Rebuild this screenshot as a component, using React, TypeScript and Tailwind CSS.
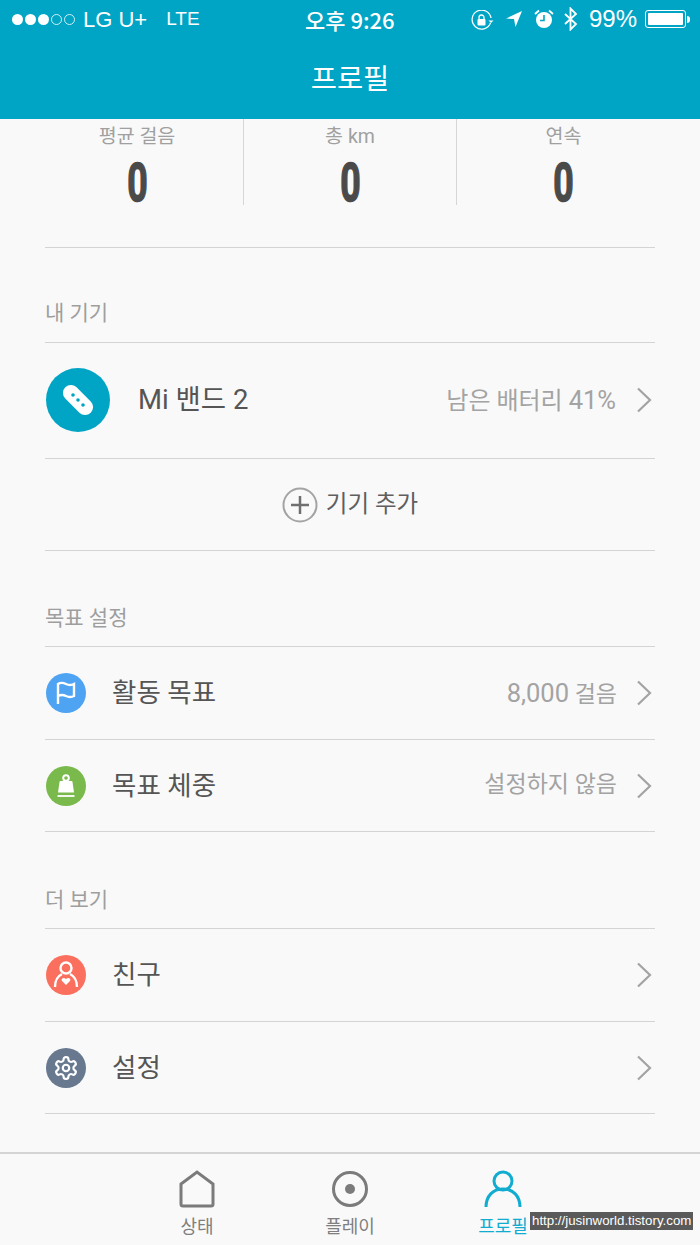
import type { ReactNode } from "react";

const font = { fontFamily: '"Roboto", "Noto Sans CJK KR", sans-serif' };

const Chevron = () => (
  <svg width="16" height="26" viewBox="0 0 16 26" fill="none" className="shrink-0">
    <path d="M2 1.500 14 13 2 24.500" stroke="#a3a3a3" strokeWidth="2.200" />
  </svg>
);

const StatusBar = () => (
  <div className="relative flex h-[38px] items-center pl-3 pr-[10px] text-white font-['Liberation_Sans',sans-serif]">
    <div className="flex items-center gap-[2px]">
      {[0, 1, 2].map((i) => (
        <span key={i} className="h-[11px] w-[11px] rounded-full bg-white" />
      ))}
      {[3, 4].map((i) => (
        <span key={i} className="h-[11px] w-[11px] rounded-full border border-white/80" />
      ))}
    </div>
    <span className="ml-[8px] text-[22px] font-light">LG U+</span>
    <span className="ml-[19px] text-[19px] font-light">LTE</span>
    <span className="absolute left-[305px] text-[22px] font-['Noto_Sans_CJK_KR'] font-medium leading-none">
      오후 9:26
    </span>
    <div className="ml-auto flex items-center">
      <svg className="mt-[3px]" width="24" height="22" viewBox="0 0 24 22" fill="none" stroke="white" strokeWidth="1.200">
        <path d="M19.500 13A9.500 9.500 0 1 1 20 8" />
        <path d="M17.500 10.500h5l-2.500 2.500z" fill="white" stroke="none" />
        <rect x="6.500" y="9" width="8" height="6.500" rx="1" fill="white" stroke="none" />
        <path d="M8 9V7.500a2.500 2.500 0 0 1 5 0V9" strokeWidth="1.300" />
      </svg>
      <svg className="ml-[10px]" width="18" height="18" viewBox="0 0 18 18">
        <path d="M17 1 1 8.500l8 .5 1.500 8z" fill="white" />
      </svg>
      <svg className="ml-[11px]" width="20" height="20" viewBox="0 0 20 20">
        <circle cx="10" cy="11" r="8" fill="white" />
        <path d="M10 6v5.500H6" stroke="#00a5c5" strokeWidth="1.600" fill="none" />
        <path d="M1 5 5 1.500M19 5l-4-3.500" stroke="white" strokeWidth="1.800" />
      </svg>
      <svg className="ml-[9px]" width="16" height="24" viewBox="0 0 16 24" fill="none" stroke="white" strokeWidth="1.800">
        <path d="M2 7l11 10-5.500 5.500V1.500L13 7 2 17" />
      </svg>
      <span className="ml-[10px] text-[24px] font-light leading-none">99%</span>
      <div className="ml-[8px] flex items-center">
        <div className="h-[18px] w-[41px] rounded-[3px] border border-white p-[2px]">
          <div className="h-full w-full rounded-[1px] bg-white" />
        </div>
        <span className="ml-[1px] h-[7px] w-[3px] rounded-r-sm bg-white" />
      </div>
    </div>
  </div>
);

const Stat = ({ label, border }: { label: string; border?: boolean }) => (
  <div className={`flex h-[86px] w-[213px] shrink-0 flex-col items-center ${border ? "border-r border-[#d6d6d6]" : ""}`}>
    <span className="mt-[5px] text-[19.500px] leading-[26px] text-[#a0a0a0]">{label}</span>
    <span className="mt-[9px] scale-x-[0.66] font-['Roboto'] text-[54px] font-bold leading-[48px] text-[#4a4a4a] [-webkit-text-stroke:1.500px_#4a4a4a]">
      0
    </span>
  </div>
);

const SectionTitle = ({ children, className }: { children: ReactNode; className: string }) => (
  <div className={`${className} border-b border-[#d4d4d4] text-[21px] leading-[28px] text-[#9e9e9e]`}>{children}</div>
);

const Row = ({ icon, label, value, height = "h-[93px]" }: { icon: ReactNode; label: string; value?: ReactNode; height?: string }) => (
  <div className={`flex ${height} items-center border-b border-[#d4d4d4] pl-[1px] pr-[3px]`}>
    {icon}
    <span className="ml-[26px] text-[26.500px] text-[#555555]">{label}</span>
    {value && <span className="ml-auto text-[23px] text-[#a3a3a3]">{value}</span>}
    <span className={value ? "ml-[19px]" : "ml-auto"}>
      <Chevron />
    </span>
  </div>
);

const FlagIcon = () => (
  <div className="flex h-10 w-10 items-center justify-center rounded-full bg-[#4ea3f3]">
    <svg width="20" height="24" viewBox="0 0 20 24" fill="none" stroke="white" strokeWidth="2.400">
      <path d="M2 23V3c3-2 5-1.500 8 0s5 1.500 8 0v12c-3 1.500-5 1.500-8 0s-5-1.500-8 0" />
    </svg>
  </div>
);

const WeightIcon = () => (
  <div className="flex h-10 w-10 items-center justify-center rounded-full bg-[#7ab94c]">
    <svg width="20" height="24" viewBox="0 0 20 24">
      <circle cx="10" cy="4" r="2.800" fill="none" stroke="white" strokeWidth="2" />
      <path d="M4.500 7h11a1 1 0 0 1 1 1l1.500 10.500H2L3.500 8a1 1 0 0 1 1-1z" fill="white" />
      <path d="M1.500 22h17" stroke="white" strokeWidth="1.800" />
    </svg>
  </div>
);

const FriendIcon = () => (
  <div className="flex h-10 w-10 items-center justify-center rounded-full bg-[#fb6f5e]">
    <svg width="30" height="30" viewBox="0 0 30 30" fill="none" stroke="white" strokeWidth="2.400">
      <circle cx="15" cy="8" r="5.500" />
      <path d="M4 27c0-7 3-11 7-13M26 27c0-7-3-11-7-13" />
      <path d="M15 25l-4-4c-1.500-2 1.500-4.500 4-2 2.500-2.500 5.500 0 4 2z" fill="white" stroke="none" />
    </svg>
  </div>
);

const GearIcon = () => (
  <div className="flex h-10 w-10 items-center justify-center rounded-full bg-[#67788f]">
    <svg width="26" height="26" viewBox="0 0 24 24" fill="none" stroke="white" strokeWidth="2">
      <path d="M12.220 2h-.440a2 2 0 0 0-2 2v.180a2 2 0 0 1-1 1.730l-.430.250a2 2 0 0 1-2 0l-.150-.080a2 2 0 0 0-2.730.730l-.220.380a2 2 0 0 0 .730 2.730l.150.100a2 2 0 0 1 1 1.720v.510a2 2 0 0 1-1 1.740l-.150.090a2 2 0 0 0-.730 2.730l.220.380a2 2 0 0 0 2.730.730l.150-.080a2 2 0 0 1 2 0l.430.250a2 2 0 0 1 1 1.730V20a2 2 0 0 0 2 2h.440a2 2 0 0 0 2-2v-.180a2 2 0 0 1 1-1.730l.430-.250a2 2 0 0 1 2 0l.150.080a2 2 0 0 0 2.730-.730l.220-.390a2 2 0 0 0-.730-2.730l-.150-.080a2 2 0 0 1-1-1.740v-.500a2 2 0 0 1 1-1.740l.150-.090a2 2 0 0 0 .730-2.730l-.220-.380a2 2 0 0 0-2.730-.730l-.150.080a2 2 0 0 1-2 0l-.430-.250a2 2 0 0 1-1-1.730V4a2 2 0 0 0-2-2z" />
      <circle cx="12" cy="12" r="3" />
    </svg>
  </div>
);

const Tab = ({ icon, label, active }: { icon: ReactNode; label: string; active?: boolean }) => (
  <div className="flex w-[153px] flex-col items-center">
    {icon}
    <span className={`mt-[7px] text-[18px] leading-[24px] ${active ? "text-[#12acd0]" : "text-[#7f7f7f]"}`}>{label}</span>
  </div>
);

const Digits = ({ children }: { children: ReactNode }) => <span className="text-[25.500px]">{children}</span>;

export default function App() {
  return (
    <div className="relative flex h-[1245px] w-[700px] flex-col overflow-hidden bg-[#f9f9f9]" style={font}>
      <header className="h-[119px] bg-[#00a5c5]">
        <StatusBar />
        <h1 className="mt-[22px] text-center text-[28.500px] leading-[40px] text-white">프로필</h1>
      </header>

      <main className="flex-1 px-[45px]">
        <div className="border-b border-[#d4d4d4] pb-[42px]">
          <div className="-ml-[14px] flex">
            <Stat label="평균 걸음" border />
            <Stat label="총 km" border />
            <Stat label="연속" />
          </div>
        </div>

        <SectionTitle className="pt-[51px] pb-[15px]">내 기기</SectionTitle>
        <div className="flex h-[116px] items-center border-b border-[#d4d4d4] pb-[1px] pl-[1px] pr-[3px]">
          <div className="flex h-16 w-16 items-center justify-center rounded-full bg-[#00a5c5]">
            <svg width="32" height="32" viewBox="0 0 32 32">
              <rect x="-2" y="8" width="36" height="16" rx="8" fill="white" transform="rotate(45 16 16)" />
              <circle cx="11" cy="11" r="1.800" fill="#00a5c5" />
              <circle cx="16" cy="16" r="1.800" fill="#00a5c5" />
              <circle cx="21" cy="21" r="1.800" fill="#00a5c5" />
            </svg>
          </div>
          <span className="ml-[28px] text-[27.500px] text-[#555555]">Mi 밴드 2</span>
          <span className="ml-auto text-[24px] text-[#a3a3a3]">
            남은 배터리 <Digits>41%</Digits>
          </span>
          <span className="ml-[20px]">
            <Chevron />
          </span>
        </div>
        <div className="flex h-[92px] items-center justify-center gap-[8px] border-b border-[#d4d4d4]">
          <svg width="36" height="36" viewBox="0 0 36 36" fill="none">
            <circle cx="18" cy="18" r="16.500" stroke="#a4a4a4" strokeWidth="2" />
            <path d="M18 9v18M9 18h18" stroke="#6f6f6f" strokeWidth="2.500" />
          </svg>
          <span className="text-[23.500px] text-[#5f5f5f]">기기 추가</span>
        </div>

        <SectionTitle className="pt-[53px] pb-[14px]">목표 설정</SectionTitle>
        <Row icon={<FlagIcon />} label="활동 목표" value={<><Digits>8,000</Digits> 걸음</>} />
        <Row icon={<WeightIcon />} label="목표 체중" value="설정하지 않음" height="h-[92px]" />

        <SectionTitle className="pt-[54px] pb-[14px]">더 보기</SectionTitle>
        <Row icon={<FriendIcon />} label="친구" />
        <Row icon={<GearIcon />} label="설정" height="h-[92px]" />
      </main>

      <nav className="flex h-[93px] justify-center border-t-2 border-[#d4d4d4] pt-[16px]">
        <Tab
          label="상태"
          icon={
            <svg width="38" height="38" viewBox="0 0 38 38" fill="none">
              <path d="M3 14 19 2l16 12v20a2 2 0 0 1-2 2H5a2 2 0 0 1-2-2z" stroke="#7b7b7b" strokeWidth="3" />
            </svg>
          }
        />
        <Tab
          label="플레이"
          icon={
            <svg width="38" height="38" viewBox="0 0 38 38" fill="none">
              <circle cx="19" cy="19" r="16.500" stroke="#7b7b7b" strokeWidth="3" />
              <circle cx="19" cy="19" r="5" fill="#7b7b7b" />
            </svg>
          }
        />
        <Tab
          active
          label="프로필"
          icon={
            <svg width="38" height="38" viewBox="0 0 38 38" fill="none" stroke="#12acd0" strokeWidth="3">
              <circle cx="19" cy="11" r="9" />
              <path d="M2 37c0-11 7-18 17-18s17 7 17 18" />
            </svg>
          }
        />
      </nav>

      <span className="absolute left-[530px] top-[1212px] bg-[#5a5a5a] px-[2px] text-[13.300px] leading-[18px] text-white font-['Liberation_Sans',sans-serif]">
        http://jusinworld.tistory.com
      </span>
    </div>
  );
}
